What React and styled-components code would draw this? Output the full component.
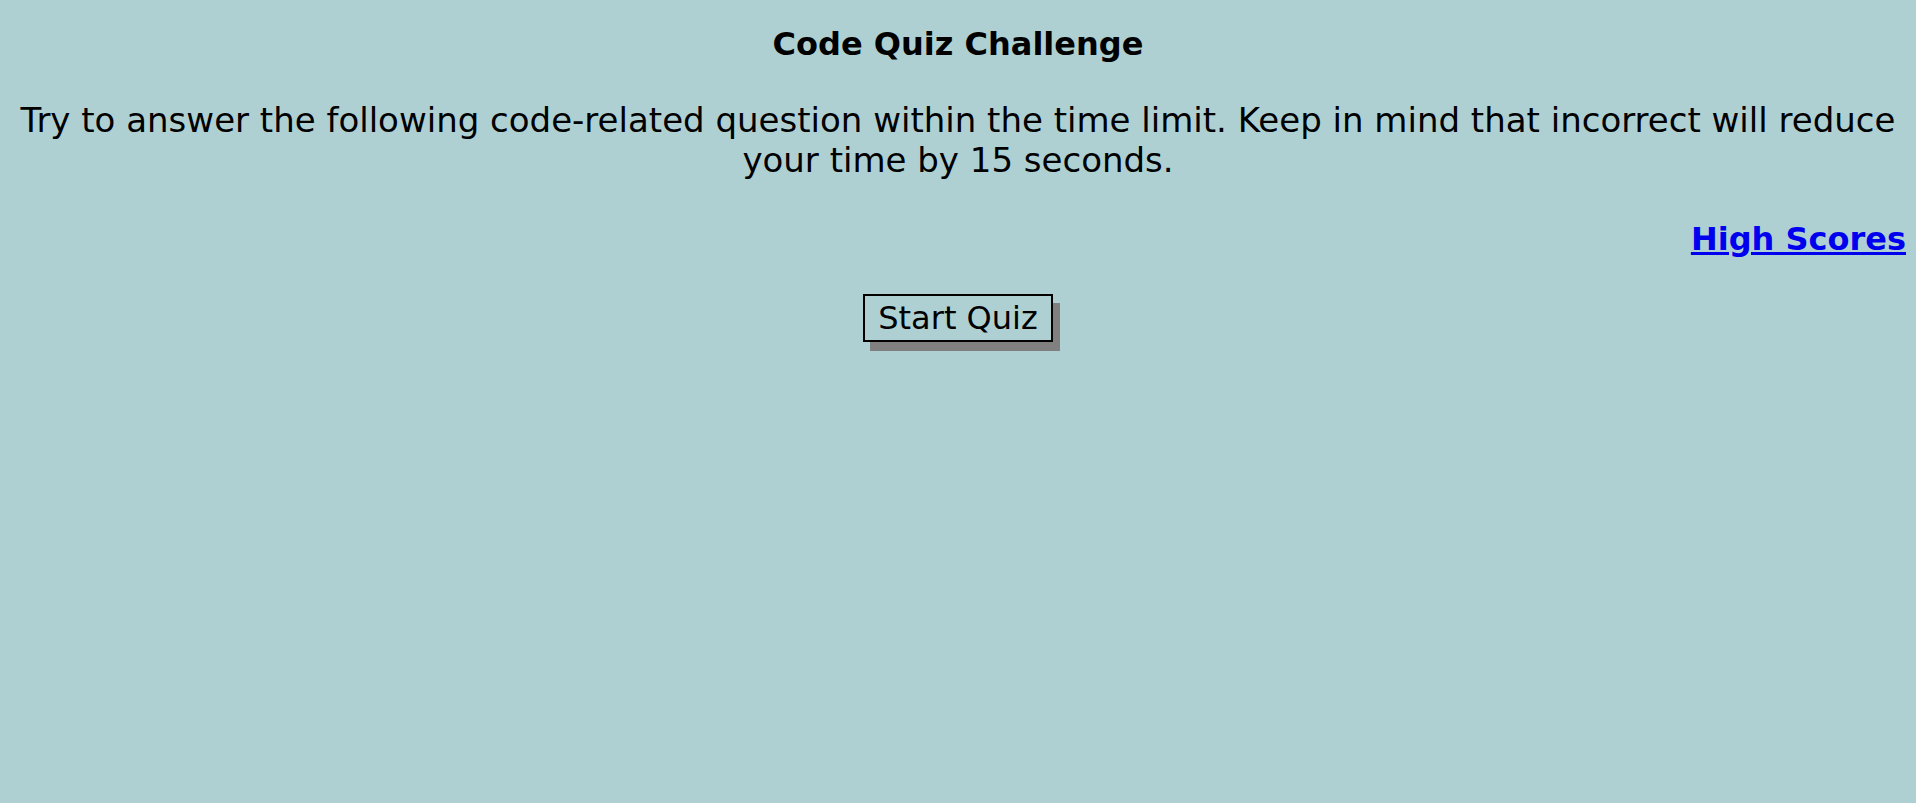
import React from 'react';
import styled, { createGlobalStyle } from 'styled-components';

const GlobalStyle = createGlobalStyle`
	body {
		margin: 0;
		background-color: #afd0d2;
		font-family: 'DejaVu Sans', sans-serif;
		color: #000000;
	}
`;

const Page = styled.div`
	padding: 0 8px;
	min-height: 100vh;
	box-sizing: border-box;
`;

const Title = styled.h1`
	margin: 25px 0 0;
	font-size: 32px;
	font-weight: bold;
	text-align: center;
`;

const Intro = styled.p`
	margin: 37px 0 0;
	font-size: 34px;
	line-height: 40px;
	text-align: center;
`;

const ScoresRow = styled.div`
	margin-top: 40px;
	display: flex;
	justify-content: flex-end;
	padding-right: 2px;
`;

const ScoresLink = styled.a`
	font-size: 32px;
	font-weight: bold;
	color: #0000ee;
	text-decoration: underline;
	cursor: pointer;
`;

const Actions = styled.div`
	margin-top: 36px;
	display: flex;
	justify-content: center;
`;

const StartButton = styled.button`
	font-family: 'DejaVu Sans', sans-serif;
	font-size: 32px;
	line-height: 38px;
	color: #000000;
	background-color: transparent;
	border: 2px solid #000000;
	border-radius: 0;
	padding: 3px 13px;
	box-shadow: 7px 9px 0 #808080;
	cursor: pointer;
`;

const App = () => {
	return (
		<Page>
			<GlobalStyle />
			<Title>Code Quiz Challenge</Title>
			<Intro>
				Try to answer the following code-related question within the time limit. Keep in mind that incorrect will
				reduce your time by 15 seconds.
			</Intro>
			<ScoresRow>
				<ScoresLink href="#">High Scores</ScoresLink>
			</ScoresRow>
			<Actions>
				<StartButton>Start Quiz</StartButton>
			</Actions>
		</Page>
	);
};

export default App;
